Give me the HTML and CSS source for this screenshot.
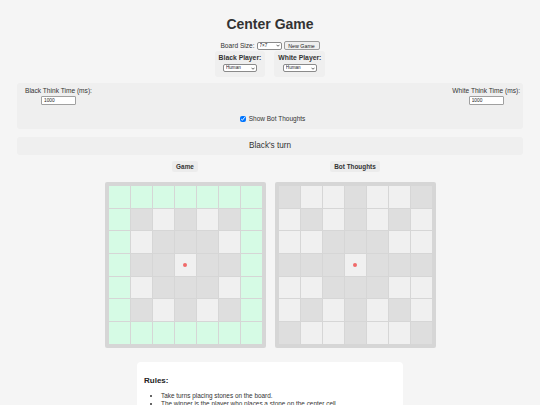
FILE: index.html
```html
<!DOCTYPE html>
<html>
<head>
<meta charset="utf-8">
<link rel="stylesheet" href="styles.css">
</head>
<body>
<h1 class="title">Center Game</h1>
<div class="size-row">
  <span>Board Size:</span>
  <span class="selwrap sel-size">
    <select class="sel"><option>7×7</option></select>
    <svg class="chev" viewBox="0 0 8 5"><path d="M1 1 L4 4 L7 1" fill="none" stroke="#222" stroke-width="1.4"/></svg>
  </span>
  <button class="btn">New Game</button>
</div>
<div class="players">
  <div class="player">
    <div class="player-label">Black Player:</div>
    <span class="selwrap sel-player">
      <select class="sel"><option>Human</option></select>
      <svg class="chev" viewBox="0 0 8 5"><path d="M1 1 L4 4 L7 1" fill="none" stroke="#222" stroke-width="1.4"/></svg>
    </span>
  </div>
  <div class="player">
    <div class="player-label">White Player:</div>
    <span class="selwrap sel-player">
      <select class="sel"><option>Human</option></select>
      <svg class="chev" viewBox="0 0 8 5"><path d="M1 1 L4 4 L7 1" fill="none" stroke="#222" stroke-width="1.4"/></svg>
    </span>
  </div>
</div>
<div class="panel">
  <div class="think-row">
    <div class="think">
      <label>Black Think Time (ms):</label>
      <input class="num" type="text" value="1000">
    </div>
    <div class="think">
      <label>White Think Time (ms):</label>
      <input class="num" type="text" value="1000">
    </div>
  </div>
  <div class="toggle-row">
    <input class="chk" type="checkbox" checked>
    <span>Show Bot Thoughts</span>
  </div>
</div>
<div class="turn">Black's turn</div>
<div class="boards">
  <div class="board-col">
    <div class="board-label">Game</div>
    <div class="board">
      <div class="c g"></div><div class="c g"></div><div class="c g"></div><div class="c g"></div><div class="c g"></div><div class="c g"></div><div class="c g"></div>
      <div class="c g"></div><div class="c d"></div><div class="c l"></div><div class="c d"></div><div class="c l"></div><div class="c d"></div><div class="c g"></div>
      <div class="c g"></div><div class="c l"></div><div class="c d"></div><div class="c d"></div><div class="c d"></div><div class="c l"></div><div class="c g"></div>
      <div class="c g"></div><div class="c d"></div><div class="c d"></div><div class="c l center"><span class="dot"></span></div><div class="c d"></div><div class="c d"></div><div class="c g"></div>
      <div class="c g"></div><div class="c l"></div><div class="c d"></div><div class="c d"></div><div class="c d"></div><div class="c l"></div><div class="c g"></div>
      <div class="c g"></div><div class="c d"></div><div class="c l"></div><div class="c d"></div><div class="c l"></div><div class="c d"></div><div class="c g"></div>
      <div class="c g"></div><div class="c g"></div><div class="c g"></div><div class="c g"></div><div class="c g"></div><div class="c g"></div><div class="c g"></div>
    </div>
  </div>
  <div class="board-col">
    <div class="board-label">Bot Thoughts</div>
    <div class="board">
      <div class="c d"></div><div class="c l"></div><div class="c l"></div><div class="c d"></div><div class="c l"></div><div class="c l"></div><div class="c d"></div>
      <div class="c l"></div><div class="c d"></div><div class="c l"></div><div class="c d"></div><div class="c l"></div><div class="c d"></div><div class="c l"></div>
      <div class="c l"></div><div class="c l"></div><div class="c d"></div><div class="c d"></div><div class="c d"></div><div class="c l"></div><div class="c l"></div>
      <div class="c d"></div><div class="c d"></div><div class="c d"></div><div class="c l center"><span class="dot"></span></div><div class="c d"></div><div class="c d"></div><div class="c d"></div>
      <div class="c l"></div><div class="c l"></div><div class="c d"></div><div class="c d"></div><div class="c d"></div><div class="c l"></div><div class="c l"></div>
      <div class="c l"></div><div class="c d"></div><div class="c l"></div><div class="c d"></div><div class="c l"></div><div class="c d"></div><div class="c l"></div>
      <div class="c d"></div><div class="c l"></div><div class="c l"></div><div class="c d"></div><div class="c l"></div><div class="c l"></div><div class="c d"></div>
    </div>
  </div>
</div>
<div class="rules">
  <h3 class="rules-title">Rules:</h3>
  <ul class="rules-list">
    <li>Take turns placing stones on the board.</li>
    <li>The winner is the player who places a stone on the center cell.</li>
  </ul>
</div>
</body>
</html>
```

FILE: styles.css
```css
html, body {
  margin: 0;
  padding: 0;
}
body {
  background: #f5f5f5;
  font-family: "Liberation Sans", Arial, sans-serif;
  color: #222;
  padding: 0 17px;
  overflow: hidden;
  height: 405px;
}
.title {
  margin: 16px 0 0;
  font-size: 14px;
  line-height: 16px;
  text-align: center;
  color: #333;
  font-weight: bold;
}
.size-row {
  margin-top: 9px;
  display: flex;
  justify-content: center;
  align-items: center;
  gap: 2px;
  font-size: 6.6px;
  height: 9px;
  color: #333;
}
.selwrap {
  position: relative;
  display: inline-block;
  height: 8px;
}
.sel {
  appearance: none;
  -webkit-appearance: none;
  display: block;
  box-sizing: border-box;
  width: 100%;
  height: 8px;
  font-family: "Liberation Sans", Arial, sans-serif;
  font-size: 4.6px;
  line-height: 6px;
  padding: 0 0 0 2px;
  margin: 0;
  border: 1px solid #8a8a8a;
  border-radius: 2px;
  background: #fff;
  color: #222;
}
.chev {
  position: absolute;
  right: 2px;
  top: 2.5px;
  width: 4px;
  height: 3px;
  pointer-events: none;
}
.sel-size { width: 25px; }
.sel-player { width: 34px; }
.btn {
  font-family: "Liberation Sans", Arial, sans-serif;
  font-size: 5.3px;
  height: 9px;
  width: 36px;
  padding: 0;
  border: 1px solid #9a9a9a;
  border-radius: 2px;
  background: #efefef;
  color: #222;
}
.players {
  margin-top: 1px;
  display: flex;
  justify-content: center;
  gap: 9px;
}
.player {
  background: #efefef;
  border-radius: 3px;
  padding: 3px 4px 5px;
  display: flex;
  flex-direction: column;
  align-items: center;
  gap: 2px;
}
.player-label {
  font-size: 6.8px;
  font-weight: bold;
  line-height: 8px;
  color: #333;
}
.panel {
  margin-top: 6px;
  background: #efefef;
  border-radius: 3px;
  padding: 4px 3px 6px 8px;
}
.think-row {
  display: flex;
  justify-content: space-between;
}
.think {
  display: flex;
  flex-direction: column;
  align-items: center;
  gap: 1px;
  font-size: 6.6px;
  line-height: 8px;
  color: #333;
}
.num {
  width: 35px;
  height: 9px;
  box-sizing: border-box;
  font-family: "Liberation Sans", Arial, sans-serif;
  font-size: 4.8px;
  padding: 0 2px;
  border: 1px solid #a0a0a0;
  border-radius: 1px;
  background: #fff;
  color: #222;
}
.toggle-row {
  margin-top: 10px;
  display: flex;
  justify-content: center;
  align-items: center;
  gap: 3px;
  font-size: 6.5px;
  line-height: 8px;
  color: #333;
}
.chk {
  width: 6px;
  height: 6px;
  margin: 0;
}
.turn {
  margin-top: 8px;
  background: #efefef;
  border-radius: 3px;
  height: 18px;
  line-height: 18px;
  text-align: center;
  font-size: 8.2px;
  color: #333;
}
.boards {
  margin-top: 6px;
  display: flex;
  justify-content: center;
  gap: 9px;
}
.board-col {
  display: flex;
  flex-direction: column;
  align-items: center;
  gap: 10px;
}
.board-label {
  background: #ececec;
  border-radius: 2px;
  padding: 0 4px;
  height: 11px;
  line-height: 11px;
  font-size: 6.4px;
  font-weight: bold;
  color: #333;
}
.board {
  background: #d6d6d6;
  border-radius: 2px;
  padding: 4px;
  display: grid;
  grid-template-columns: repeat(7, 21px);
  grid-template-rows: repeat(7, 21.7px);
  gap: 1px;
}
.c {
  display: flex;
  align-items: center;
  justify-content: center;
}
.g { background: #d6fbe5; }
.d { background: #dedede; }
.l { background: #f0f0f0; }
.dot {
  width: 4px;
  height: 4px;
  border-radius: 50%;
  background: #f06a6a;
}
.rules {
  width: 252px;
  margin: 14px auto 0;
  background: #fff;
  border-radius: 4px;
  padding: 14px 7px 10px;
}
.rules-title {
  margin: 0 0 6px;
  font-size: 8px;
  line-height: 10px;
  font-weight: bold;
  color: #222;
}
.rules-list {
  margin: 0;
  padding-left: 17px;
  font-size: 6.4px;
  line-height: 8px;
  color: #333;
}
```
